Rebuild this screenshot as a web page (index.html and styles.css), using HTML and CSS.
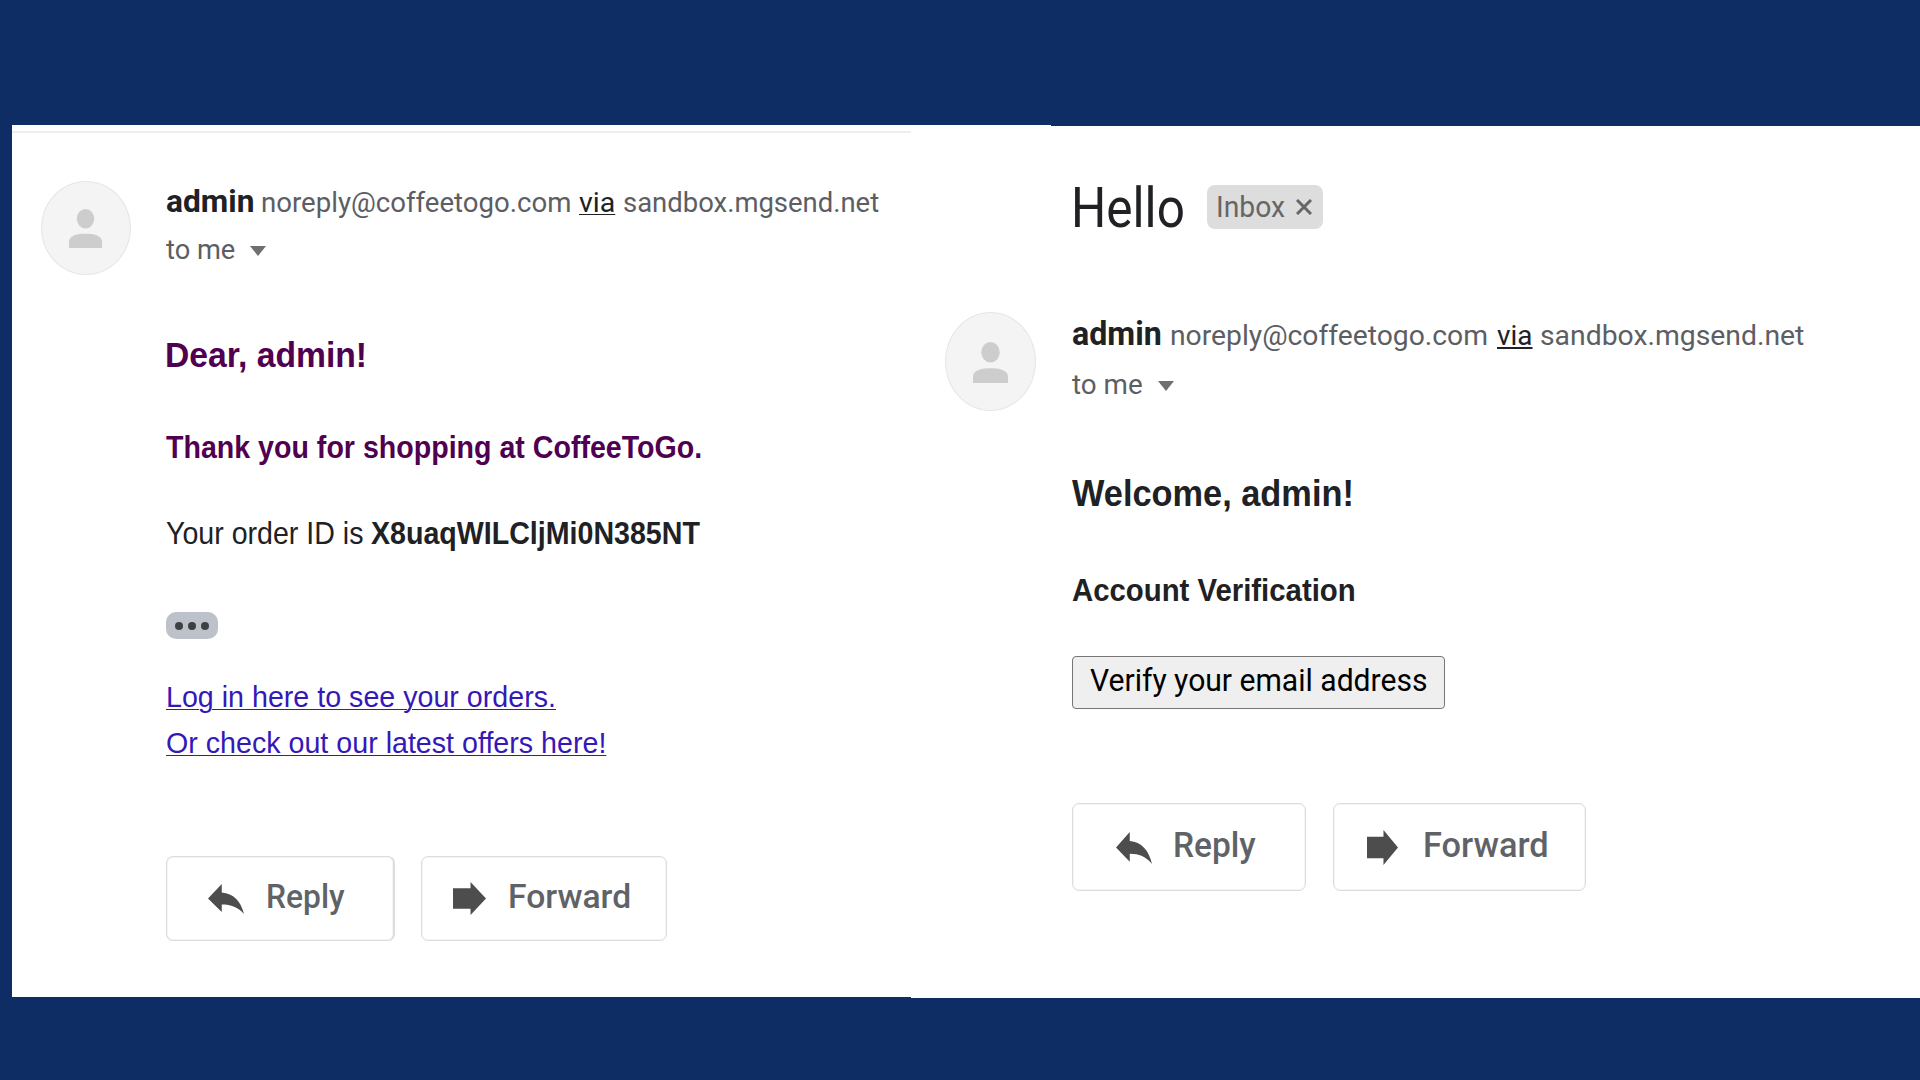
FILE: index.html
```html
<!DOCTYPE html>
<html lang="en">
<head>
<meta charset="utf-8">
<title>Order and verification emails</title>
<link rel="stylesheet" href="styles.css">
</head>
<body>
<svg width="0" height="0" class="defs">
  <symbol id="reply" viewBox="0 0 34 30" preserveAspectRatio="none"><path d="M0 14.5 13 0v8.500C24 9.500 31 17 34 30 28 23 22 20.500 13 20.500V28z"/></symbol>
  <symbol id="forward" viewBox="0 0 32 34" preserveAspectRatio="none"><path d="M0 6.500H17V0L32 17 17 34V27.500H0z"/></symbol>
  <symbol id="person" viewBox="0 0 34 40" preserveAspectRatio="none"><ellipse cx="17" cy="10" rx="9" ry="10"/><path d="M0 40V34C0 27 9 25.500 17 25.500S34 27 34 34V40z"/></symbol>
</svg>
<main class="stage">
  <section class="mail order">
    <div class="avatar"><svg><use href="#person"/></svg></div>
    <div class="content">
      <div class="line sender"><b class="name">admin</b><span class="address">noreply@coffeetogo.com</span><span class="via">via</span><span class="host">sandbox.mgsend.net</span></div>
      <div class="line recipient"><span class="to">to me</span><i class="caret"></i></div>
      <h1 class="line title"><span>Dear, admin!</span></h1>
      <h2 class="line subtitle"><span>Thank you for shopping at CoffeeToGo.</span></h2>
      <p class="line order-id"><span class="label">Your order ID is</span><b class="code">X8uaqWILCljMi0N385NT</b></p>
      <div class="more"><i></i><i></i><i></i></div>
      <p class="line link first"><a>Log in here to see your orders.</a></p>
      <p class="line link"><a>Or check out our latest offers here!</a></p>
      <div class="actions">
        <div class="action reply"><svg><use href="#reply"/></svg><span>Reply</span></div>
        <div class="action forward"><svg><use href="#forward"/></svg><span>Forward</span></div>
      </div>
    </div>
  </section>
  <section class="mail verify">
    <div class="avatar"><svg><use href="#person"/></svg></div>
    <div class="content">
      <div class="subject"><span class="hello">Hello</span><div class="badge"><span>Inbox</span><svg viewBox="0 0 16 16" preserveAspectRatio="none"><path d="M1 1 15 15M15 1 1 15"/></svg></div></div>
      <div class="line sender"><b class="name">admin</b><span class="address">noreply@coffeetogo.com</span><span class="via">via</span><span class="host">sandbox.mgsend.net</span></div>
      <div class="line recipient"><span class="to">to me</span><i class="caret"></i></div>
      <h1 class="line title"><span>Welcome, admin!</span></h1>
      <h2 class="line subtitle"><span>Account Verification</span></h2>
      <div class="verify-button"><span>Verify your email address</span></div>
      <div class="actions">
        <div class="action reply"><svg><use href="#reply"/></svg><span>Reply</span></div>
        <div class="action forward"><svg><use href="#forward"/></svg><span>Forward</span></div>
      </div>
    </div>
  </section>
</main>
</body>
</html>
```
FILE: styles.css
```css
* { box-sizing: border-box; }
body { margin: 0; background: #0e2d64; overflow: hidden; font-family: Roboto, sans-serif; color: #202124; }
h1, h2, p { margin: 0; font-weight: 400; }
.defs { position: absolute; }
.stage { display: flex; height: 1080px; padding: 125px 0 0 12px; }
.mail { display: flex; background: #fff; }
.order { width: 899px; height: 872px; background: linear-gradient(#eeeef0, #eeeef0) 0 6px / 100% 2px no-repeat #fff; }
.verify { width: 1009px; height: 873px; background: linear-gradient(#0e2d64, #0e2d64) 140px 0 / 869px 1px no-repeat #fff; }

/* Each label is condensed horizontally by its own factor. */
.line { display: flex; align-items: baseline; height: 40px; line-height: 40px; white-space: nowrap; }
.line > span, .line > b, .line > a, .hello, .badge span, .verify-button span, .action span {
  flex: none; transform: scaleX(var(--k, 1)); transform-origin: 0 50%; white-space: nowrap;
}

.avatar { flex: none; display: flex; justify-content: center; background: #f4f4f4; border: 1px solid #e6e6e6; border-radius: 50%; }
.avatar svg { fill: #cdcdcd; margin-right: 1px; }
.order .avatar { width: 90px; height: 94px; margin: 56px 0 0 29px; padding-top: 27px; }
.order .avatar svg { width: 33px; height: 39px; }
.verify .avatar { width: 91px; height: 99px; margin: 187px 0 0 34px; padding-top: 29px; }
.verify .avatar svg { width: 35px; height: 41px; }
.order .content { margin-left: 35px; padding-top: 57px; }
.verify .content { margin-left: 36px; padding-top: 53px; }

.name { font-weight: 700; }
.address, .host, .to { color: #5c5e63; }
.via { color: #202124; text-decoration: underline; text-underline-offset: 2px; text-decoration-thickness: 1px; }
.verify .via { text-decoration-thickness: 2px; }
.caret { border: solid transparent; border-width: 10px 8.5px 0; border-top-color: #6f6f6f; align-self: flex-start; }

.order .name { font-size: 31px; width: 95px; --k: 1.0226; }
.order .address { font-size: 28px; width: 318px; --k: .9854; }
.order .via { font-size: 28px; width: 35.6px; margin-right: 8.4px; --k: 1.0183; }
.order .host { font-size: 28px; --k: .9803; }
.order .recipient { margin-top: 8px; }
.order .to { font-size: 28px; width: 84px; --k: .9736; }
.order .caret { margin-top: 16px; }

.title, .subtitle, .order-id, .link { font-family: "Liberation Sans", sans-serif; }
.title span, .subtitle span { font-weight: 700; }
.order .title, .order .subtitle { color: #500050; }
.order .title { margin-top: 65px; margin-left: -1px; font-size: 35.5px; --k: .9484; }
.order .subtitle { margin-top: 53px; font-size: 31px; --k: .922; }
.order-id { margin-top: 45px; font-size: 30.5px; }
.label { width: 205px; --k: .9367; }
.code { --k: .9374; }
.more { display: flex; justify-content: center; align-items: center; gap: 5px; width: 52px; height: 27px; margin-top: 59px; background: #bdc1c9; border-radius: 10px; }
.more i { width: 8px; height: 8px; border-radius: 50%; background: #3c4043; }
.link { margin-top: 6px; font-size: 30px; color: #3418b8; }
.link.first { margin-top: 38px; }
.link a { --k: .9545; text-decoration: underline; text-decoration-thickness: 1px; text-underline-offset: 2px; }

.actions { display: flex; }
.action { display: flex; align-items: center; border: 1.500px solid #dadce0; border-radius: 7px; color: #5f6368; font-weight: 500; box-shadow: inset 0 0 0 1px #f4f5f6; }
.action svg { flex: none; fill: #4d4d4d; }
.order .actions { margin-top: 93px; gap: 26px; }
.order .action { height: 85px; font-size: 34px; }
.order .reply { width: 229px; padding-left: 41px; border-right-width: 2px; }
.order .forward { width: 246px; padding-left: 31px; }
.order .action span { padding-bottom: 6px; }
.order .reply span { margin-left: 22px; --k: .935; }
.order .forward span { margin-left: 22px; --k: .99; }
.order .reply svg { width: 36px; height: 30px; margin-top: 1px; }
.order .forward svg { width: 33px; height: 33px; }

.subject { display: flex; align-items: flex-start; height: 60px; }
.hello { width: 136px; margin-left: -1px; font-size: 55px; line-height: 60px; --k: .9; }
.badge { display: flex; align-items: flex-start; width: 116px; height: 44px; margin-top: 7px; padding-left: 9px; border-radius: 8px; background: #ddd; color: #666; }
.badge span { width: 80px; font-size: 29.5px; line-height: 44px; --k: .9582; }
.badge svg { width: 16px; height: 16px; margin-top: 14px; fill: none; stroke: #666; stroke-width: 3; }
.verify .sender { margin-top: 76px; }
.verify .name { font-size: 32.5px; width: 97.5px; --k: .9893; }
.verify .address, .verify .via, .verify .host, .verify .to { font-size: 28.5px; }
.verify .address { width: 327px; --k: .9917; }
.verify .via { width: 36.2px; margin-right: 7.8px; --k: .9788; }
.verify .host { --k: .9938; }
.verify .recipient { margin-top: 11px; }
.verify .to { width: 86px; --k: .9743; }
.verify .caret { margin-top: 16px; }
.verify .title { margin-top: 69px; font-size: 36.3px; --k: .9463; }
.verify .subtitle { margin-top: 56px; font-size: 31.5px; --k: .9314; }
.verify-button { width: 373px; height: 53px; margin-top: 46px; padding-left: 17px; border: 1.500px solid #767676; border-radius: 4px; background: #efefef; color: #000; font-size: 31.5px; line-height: 48px; }
.verify-button span { display: block; --k: .9549; }
.verify .actions { margin-top: 94px; gap: 27px; }
.verify .action { height: 88px; font-size: 35.5px; }
.verify .reply { width: 234px; padding-left: 43px; }
.verify .forward { width: 253px; padding-left: 33px; }
.verify .action span { padding-bottom: 5px; }
.verify .reply span { margin-left: 21px; --k: .943; }
.verify .forward span { margin-left: 25px; --k: .9676; }
.verify .reply svg { width: 36px; height: 32px; margin-top: 2px; }
.verify .forward svg { width: 31px; height: 35px; margin-top: 1px; }
```
